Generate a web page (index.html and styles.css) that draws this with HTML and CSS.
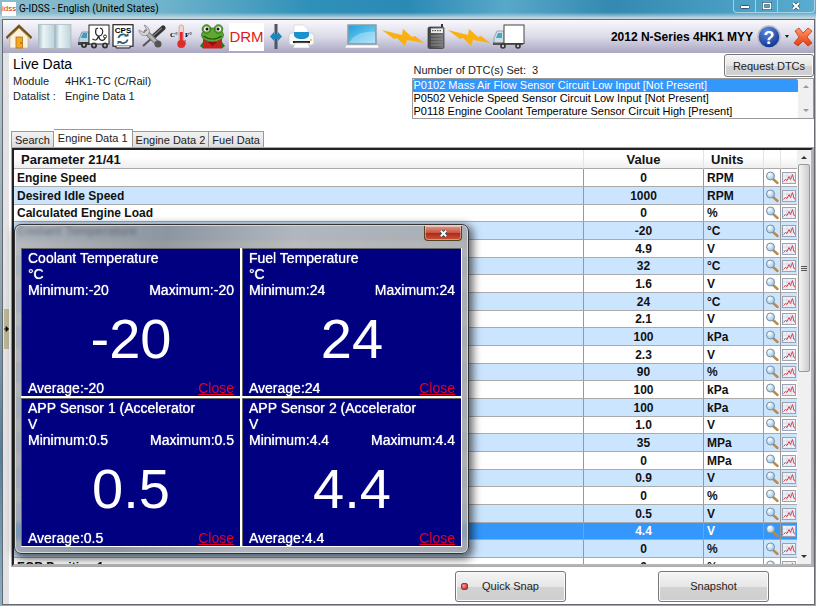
FILE: index.html
```html
<!DOCTYPE html>
<html lang="en">
<head>
<meta charset="utf-8">
<title>G-IDSS - English (United States)</title>
<link rel="stylesheet" href="styles.css">
</head>
<body>
<svg class="defs" aria-hidden="true">
  <defs>
    <radialGradient id="lens" cx="35%" cy="30%" r="80%"><stop offset="0" stop-color="#fff"/><stop offset="1" stop-color="#8fbfe0"/></radialGradient>
    <linearGradient id="sky" x1="0" y1="0" x2="1" y2="1"><stop offset="0" stop-color="#1c9fdc"/><stop offset="1" stop-color="#8fdcf8"/></linearGradient>
    <linearGradient id="page" x1="0" x2="1"><stop offset="0" stop-color="#9fbfca"/><stop offset=".3" stop-color="#eaf4f6"/><stop offset="1" stop-color="#bcd3da"/></linearGradient>
    <radialGradient id="ball" cx="40%" cy="25%" r="80%"><stop offset="0" stop-color="#5d8be0"/><stop offset="1" stop-color="#0b2c8c"/></radialGradient>
    <linearGradient id="cross" x1="0" y1="0" x2="0" y2="1"><stop offset="0" stop-color="#ff9a6c"/><stop offset="1" stop-color="#e8390b"/></linearGradient>
    <linearGradient id="device" x1="0" x2="1"><stop offset="0" stop-color="#444"/><stop offset="1" stop-color="#777"/></linearGradient>
  </defs>
  <symbol id="mag" viewBox="0 0 14 14">
    <path d="M8 8l4.500 4" stroke="#b98a4a" stroke-width="2.400" stroke-linecap="round"/>
    <circle cx="5.500" cy="5" r="4" fill="url(#lens)" stroke="#7890a8"/>
  </symbol>
  <symbol id="chart" viewBox="0 0 14 12">
    <rect x=".5" y=".5" width="13" height="11" fill="#eef1f8" stroke="#9aa2b4"/>
    <path d="M1 4h12M1 7.500h12M5 1v10M9 1v10" stroke="#cfd5e4" stroke-width=".7"/>
    <path d="M1.500 9.500l2-2 1.500 1 2-4 1.500 3 2-5 1.500 6 1 .5" fill="none" stroke="#d8474f"/>
  </symbol>
  <symbol id="bolt" viewBox="0 0 42 18">
    <path d="M0 2l20 5 1-6 9 8 3-1 9 7-17-3-2 6-8-8-3 1z" fill="#fbb011"/>
  </symbol>
</svg>

<div class="window">
  <header class="titlebar">
    <span class="app-icon">idss</span>
    <h1>G-IDSS - English (United States)</h1>
    <div class="window-controls">
      <button aria-label="Minimize"><svg viewBox="0 0 10 8" width="10" height="8"><rect x=".5" y="3.500" width="9" height="3" rx="1" fill="#fff" stroke="#35586c"/></svg></button>
      <button aria-label="Maximize"><svg viewBox="0 0 10 8" width="10" height="8"><rect x="1.500" y="1.500" width="7" height="5" fill="none" stroke="#35586c" stroke-width="3"/><rect x="1.500" y="1.500" width="7" height="5" fill="none" stroke="#fff" stroke-width="1.500"/></svg></button>
      <button class="wide" aria-label="Close window"><svg viewBox="0 0 10 8" width="10" height="8"><path d="M2 1l6 6M8 1L2 7" stroke="#35586c" stroke-width="3.500"/><path d="M2 1l6 6M8 1L2 7" stroke="#fff" stroke-width="2"/></svg></button>
    </div>
  </header>

  <div class="frame">
    <nav class="toolbar" aria-label="Tools">
      <div class="tools">
        <button class="home" aria-label="Home"><svg viewBox="0 0 26 25" width="26" height="25"><path d="M4 12L13 4l9 8v12H4z" fill="#fbf3df" stroke="#b8a98a" stroke-width=".6"/><path d="M0.500 14L13 2l12.500 12" fill="none" stroke="#74501d" stroke-width="2.600"/><path d="M2 14L13 4l11 10" fill="none" stroke="#c79a4c" stroke-width="1"/><rect x="10" y="13" width="6.500" height="11" fill="#f5a722" stroke="#b36f0a" stroke-width=".8"/><circle cx="15" cy="19" r=".8" fill="#7b4a00"/></svg></button>
        <button class="book" aria-label="Manual"><svg viewBox="0 0 34 25" width="34" height="25"><rect x=".5" y=".5" width="16" height="24" fill="url(#page)" stroke="#a9b6bd" stroke-width=".7"/><rect x="17" y=".5" width="16" height="24" fill="url(#page)" stroke="#a9b6bd" stroke-width=".7"/></svg></button>
        <button class="diag" aria-label="Diagnostics"><svg viewBox="0 0 32 25" width="32" height="25"><path d="M1 20v-5l3-7h7v12z" fill="#b9d5de" stroke="#789" stroke-width=".8"/><path d="M3 14l2-5h4v5z" fill="#3d9cc4"/><path d="M0 18h12v3H0z" fill="#444"/><rect x="11" y="1" width="20" height="19" fill="#fff" stroke="#222"/><g fill="#333"><circle cx="6" cy="21" r="3"/><circle cx="16" cy="21.500" r="3"/><circle cx="27" cy="21.500" r="3"/></g><g fill="#bbb"><circle cx="6" cy="21" r="1.200"/><circle cx="16" cy="21.500" r="1.200"/><circle cx="27" cy="21.500" r="1.200"/></g><path d="M20 4l-2 1c-1 4 0 7 3 7s5-4 3-7l-2-1M21 12c0 6 6 5 6 2M20.500 12c-1 4-3 5-6 3" fill="none" stroke="#222" stroke-width="1.200"/><circle cx="27" cy="12.500" r="1.500" fill="#fff" stroke="#222"/></svg></button>
        <button class="cps" aria-label="CPS programming"><svg viewBox="0 0 22 25" width="22" height="25"><rect x="1" y=".7" width="20" height="21.500" fill="#fff" stroke="#222" stroke-width="1.200"/><text x="11" y="8.500" text-anchor="middle" class="cps-text">CPS</text><path d="M6.500 14a4.500 4 0 0 1 8-2M15.500 15.500a4.500 4 0 0 1-8 2" fill="none" stroke="#2d6078" stroke-width="1.800"/><path d="M12 12.500h4.500V9zM10 17H5.500v3.500z" fill="#2d6078"/><path d="M4 22v2h14v-2" fill="#ddd" stroke="#222"/></svg></button>
        <button class="wrench" aria-label="Service tools"><svg viewBox="0 0 28 25" width="28" height="25"><path d="M25 4L14 14" stroke="#333" stroke-width="5" stroke-linecap="round"/><path d="M24 4L15 12" stroke="#777" stroke-width="1.500"/><path d="M14 14l-9 8" stroke="#555" stroke-width="2"/><path d="M8 8l12 12" stroke="#777" stroke-width="5" stroke-linecap="round"/><path d="M8 8l12 12" stroke="#b5b5b5" stroke-width="3" stroke-linecap="round"/><path d="M6 1l3 5-3 3-5-3c0 4 4 7 8 5 4-2 3-8-3-10z" fill="#d5d5d5" stroke="#888" stroke-width=".8"/><circle cx="20" cy="20" r="3.500" fill="#555"/></svg></button>
        <button class="temp" aria-label="Temperature units"><svg viewBox="0 0 24 25" width="24" height="25"><text x="0" y="13" class="temp-text">C°</text><text x="15" y="13" class="temp-text">F°</text><rect x="9" y="1" width="4.500" height="18" rx="2" fill="#f0d4d4" stroke="#b99" stroke-width=".7"/><path d="M9.800 8h3v10h-3z" fill="#e02b2b"/><circle cx="11.300" cy="20" r="4" fill="#e02b2b"/><path d="M15 16v5" stroke="#d22"/></svg></button>
        <button class="frog" aria-label="Frog"><svg viewBox="0 0 25 25" width="25" height="25"><rect x="3" y="15" width="19" height="9.500" fill="#c8201c"/><path d="M0 22l3-4v6.500zM25 22l-3-4v6.500z" fill="#2d7a1e"/><ellipse cx="12.500" cy="11" rx="11" ry="7" fill="#5ea832" stroke="#2f6a17" stroke-width=".8"/><circle cx="6.500" cy="5" r="4.300" fill="#5ea832" stroke="#2f6a17" stroke-width=".8"/><circle cx="18.500" cy="5" r="4.300" fill="#5ea832" stroke="#2f6a17" stroke-width=".8"/><circle cx="6.500" cy="5" r="2.500" fill="#fff"/><circle cx="18.500" cy="5" r="2.500" fill="#fff"/><circle cx="7" cy="5" r="1.500" fill="#111"/><circle cx="18" cy="5" r="1.500" fill="#111"/><path d="M3.500 12c5 4 13 4 18 0" fill="none" stroke="#224d10" stroke-width="1.200"/><path d="M8 18h9l-4.500 4z" fill="#8e0d0d"/></svg></button>
        <button class="drm">DRM</button>
        <button class="split" aria-label="Split view"><svg viewBox="0 0 12 25" width="12" height="25"><rect x="4.500" y="0" width="3" height="25" fill="#4b5563"/><path d="M0 12.500L4 8v9zM12 12.500L8 8v9z" fill="#1f86bd"/><rect x="3" y="10" width="6" height="5" fill="#1f86bd"/></svg></button>
        <button class="print" aria-label="Print"><svg viewBox="0 0 27 25" width="27" height="25"><path d="M6 10V1h10l4 5v4z" fill="#fff" stroke="#ccc" stroke-width=".6"/><rect x="1" y="9" width="25" height="12" rx="3" fill="#f8f8fa" stroke="#c6c6ce" stroke-width=".7"/><path d="M6 8h15v4q-2 3-5 3h-5q-3 0-5-3z" fill="#1b91cd"/><path d="M5 17h17v2H5z" fill="#222"/><circle cx="23" cy="16" r="1" fill="#d8c33a"/><path d="M7 19h13l2 5H5z" fill="#fff" stroke="#bbb" stroke-width=".6"/></svg></button>
      </div>
      <div class="link-status">
        <svg viewBox="0 0 34 25" width="34" height="25"><rect x="3" y="1" width="28" height="19" fill="url(#sky)" stroke="#8a9aa6" stroke-width="1.500"/><path d="M4 19c5-9 14-12 26-11v11z" fill="#fff" opacity=".3"/><path d="M1 21h32l1 3H0z" fill="#fff" stroke="#bbb" stroke-width=".6"/></svg>
        <svg class="bolt" width="42" height="18"><use href="#bolt"/></svg>
        <svg viewBox="0 0 18 25" width="18" height="25"><path d="M14 0h2v4h-2z" fill="#333"/><rect x="1" y="3" width="16" height="21.500" rx="1.500" fill="url(#device)" stroke="#333" stroke-width=".7"/><rect x="4" y="4.500" width="12" height="4.500" fill="#eee"/><path d="M5 6.700h10" stroke="#333" stroke-dasharray="1.500 1"/><path d="M4 12h12M4 15h12M4 18h12M4 21h12" stroke="#999" stroke-width=".8"/></svg>
        <svg class="bolt" width="42" height="18"><use href="#bolt"/></svg>
        <svg viewBox="0 0 32 25" width="32" height="25"><path d="M1 20v-6l3-7h7v13z" fill="#cfe0e4" stroke="#8a9aa0" stroke-width=".8"/><path d="M3 14l2-5h4v5z" fill="#3da9cc"/><path d="M0 18.500h30v2.500H0z" fill="#555"/><rect x="11" y="1" width="20" height="18.500" fill="#fff" stroke="#444"/><g fill="#333"><circle cx="10" cy="22" r="2.800"/><circle cx="25" cy="22" r="2.800"/></g><g fill="#ccc"><circle cx="10" cy="22" r="1.200"/><circle cx="25" cy="22" r="1.200"/></g></svg>
      </div>
      <div class="vehicle">
        <strong>2012 N-Series 4HK1 MYY</strong>
        <button class="help" aria-label="Help"><svg viewBox="0 0 24 24" width="24" height="24"><circle cx="12" cy="12" r="11" fill="url(#ball)" stroke="#b5bac6" stroke-width="1.500"/><text x="12" y="18.500" text-anchor="middle" class="help-text">?</text></svg></button>
        <span class="caret"></span>
        <button class="exit" aria-label="Exit"><svg viewBox="0 0 20 20" width="20" height="20"><path d="M2 4l4-3 4 5 5-5 4 3-5 6 5 6-4 3-5-5-5 5-4-3 5-6z" fill="url(#cross)" stroke="#c03a10" stroke-width=".8" stroke-linejoin="round"/></svg></button>
      </div>
    </nav>

    <main class="content">
      <section class="summary">
        <div class="module">
          <h2>Live Data</h2>
          <dl>
            <dt>Module</dt><dd>4HK1-TC (C/Rail)</dd>
            <dt>Datalist :</dt><dd>Engine Data 1</dd>
          </dl>
        </div>
        <div class="dtc">
          <div class="dtc-head">
            <label for="dtc-list">Number of DTC(s) Set: &nbsp;3</label>
            <button class="btn request">Request DTCs</button>
          </div>
          <div class="dtc-box">
            <select id="dtc-list" size="3">
              <option selected>P0102 Mass Air Flow Sensor Circuit Low Input [Not Present]</option>
              <option>P0502 Vehicle Speed Sensor Circuit Low Input [Not Present]</option>
              <option>P0118 Engine Coolant Temperature Sensor Circuit High [Present]</option>
            </select>
            <div class="mini-scroll"><i class="up"></i><i class="down"></i></div>
          </div>
        </div>
      </section>

      <div class="tabs" role="tablist">
        <button role="tab">Search</button>
        <button role="tab" class="active" aria-selected="true">Engine Data 1</button>
        <button role="tab">Engine Data 2</button>
        <button role="tab">Fuel Data</button>
      </div>

      <section class="grid-panel">
        <div class="grid-view">
          <table>
            <colgroup><col><col class="c-value"><col class="c-units"><col class="c-icon"><col class="c-icon2"></colgroup>
            <thead><tr><th>Parameter 21/41</th><th>Value</th><th>Units</th><th></th><th></th></tr></thead>
            <tbody>
              <tr><td>Engine Speed</td><td>0</td><td>RPM</td><td><button aria-label="Zoom"><svg><use href="#mag"/></svg></button></td><td><button aria-label="Graph"><svg><use href="#chart"/></svg></button></td></tr>
              <tr><td>Desired Idle Speed</td><td>1000</td><td>RPM</td><td><button aria-label="Zoom"><svg><use href="#mag"/></svg></button></td><td><button aria-label="Graph"><svg><use href="#chart"/></svg></button></td></tr>
              <tr><td>Calculated Engine Load</td><td>0</td><td>%</td><td><button aria-label="Zoom"><svg><use href="#mag"/></svg></button></td><td><button aria-label="Graph"><svg><use href="#chart"/></svg></button></td></tr>
              <tr><td>Coolant Temperature</td><td>-20</td><td>°C</td><td><button aria-label="Zoom"><svg><use href="#mag"/></svg></button></td><td><button aria-label="Graph"><svg><use href="#chart"/></svg></button></td></tr>
              <tr><td></td><td>4.9</td><td>V</td><td><button aria-label="Zoom"><svg><use href="#mag"/></svg></button></td><td><button aria-label="Graph"><svg><use href="#chart"/></svg></button></td></tr>
              <tr><td></td><td>32</td><td>°C</td><td><button aria-label="Zoom"><svg><use href="#mag"/></svg></button></td><td><button aria-label="Graph"><svg><use href="#chart"/></svg></button></td></tr>
              <tr><td></td><td>1.6</td><td>V</td><td><button aria-label="Zoom"><svg><use href="#mag"/></svg></button></td><td><button aria-label="Graph"><svg><use href="#chart"/></svg></button></td></tr>
              <tr><td></td><td>24</td><td>°C</td><td><button aria-label="Zoom"><svg><use href="#mag"/></svg></button></td><td><button aria-label="Graph"><svg><use href="#chart"/></svg></button></td></tr>
              <tr><td></td><td>2.1</td><td>V</td><td><button aria-label="Zoom"><svg><use href="#mag"/></svg></button></td><td><button aria-label="Graph"><svg><use href="#chart"/></svg></button></td></tr>
              <tr><td></td><td>100</td><td>kPa</td><td><button aria-label="Zoom"><svg><use href="#mag"/></svg></button></td><td><button aria-label="Graph"><svg><use href="#chart"/></svg></button></td></tr>
              <tr><td></td><td>2.3</td><td>V</td><td><button aria-label="Zoom"><svg><use href="#mag"/></svg></button></td><td><button aria-label="Graph"><svg><use href="#chart"/></svg></button></td></tr>
              <tr><td></td><td>90</td><td>%</td><td><button aria-label="Zoom"><svg><use href="#mag"/></svg></button></td><td><button aria-label="Graph"><svg><use href="#chart"/></svg></button></td></tr>
              <tr><td></td><td>100</td><td>kPa</td><td><button aria-label="Zoom"><svg><use href="#mag"/></svg></button></td><td><button aria-label="Graph"><svg><use href="#chart"/></svg></button></td></tr>
              <tr><td></td><td>100</td><td>kPa</td><td><button aria-label="Zoom"><svg><use href="#mag"/></svg></button></td><td><button aria-label="Graph"><svg><use href="#chart"/></svg></button></td></tr>
              <tr><td></td><td>1.0</td><td>V</td><td><button aria-label="Zoom"><svg><use href="#mag"/></svg></button></td><td><button aria-label="Graph"><svg><use href="#chart"/></svg></button></td></tr>
              <tr><td></td><td>35</td><td>MPa</td><td><button aria-label="Zoom"><svg><use href="#mag"/></svg></button></td><td><button aria-label="Graph"><svg><use href="#chart"/></svg></button></td></tr>
              <tr><td></td><td>0</td><td>MPa</td><td><button aria-label="Zoom"><svg><use href="#mag"/></svg></button></td><td><button aria-label="Graph"><svg><use href="#chart"/></svg></button></td></tr>
              <tr><td></td><td>0.9</td><td>V</td><td><button aria-label="Zoom"><svg><use href="#mag"/></svg></button></td><td><button aria-label="Graph"><svg><use href="#chart"/></svg></button></td></tr>
              <tr><td></td><td>0</td><td>%</td><td><button aria-label="Zoom"><svg><use href="#mag"/></svg></button></td><td><button aria-label="Graph"><svg><use href="#chart"/></svg></button></td></tr>
              <tr><td></td><td>0.5</td><td>V</td><td><button aria-label="Zoom"><svg><use href="#mag"/></svg></button></td><td><button aria-label="Graph"><svg><use href="#chart"/></svg></button></td></tr>
              <tr class="selected"><td></td><td>4.4</td><td>V</td><td><button aria-label="Zoom"><svg><use href="#mag"/></svg></button></td><td><button aria-label="Graph"><svg><use href="#chart"/></svg></button></td></tr>
              <tr class="tint"><td></td><td>0</td><td>%</td><td><button aria-label="Zoom"><svg><use href="#mag"/></svg></button></td><td><button aria-label="Graph"><svg><use href="#chart"/></svg></button></td></tr>
              <tr><td>EGR Position 1</td><td>0</td><td>%</td><td><button aria-label="Zoom"><svg><use href="#mag"/></svg></button></td><td><button aria-label="Graph"><svg><use href="#chart"/></svg></button></td></tr>
            </tbody>
          </table>
        </div>
        <div class="scrollbar"><i class="up"></i><div class="thumb"><i></i><i></i><i></i></div><div class="track"></div><i class="down"></i></div>
      </section>

      <footer class="actions">
        <button class="btn snap"><span class="dot"></span>Quick Snap</button>
        <button class="btn snap">Snapshot</button>
      </footer>
    </main>
    <button class="splitter" aria-label="Expand side panel"><svg viewBox="0 0 6 8" width="5" height="8"><path d="M0 4h3M2.500 1L5.500 4l-3 3z" stroke="#000" fill="#000"/></svg></button>
  </div>

  <div class="dialog" role="dialog" aria-label="Parameter values">
    <div class="dialog-bar"><button class="dialog-close" aria-label="Close dialog"><svg viewBox="0 0 12 10" width="11" height="9"><path d="M3 2l6 6M9 2L3 8" stroke="#444" stroke-width="4"/><path d="M3 2l6 6M9 2L3 8" stroke="#fff" stroke-width="2.200"/></svg></button></div>
    <div class="gauges">
      <article><p>Coolant Temperature</p><p>°C</p><div class="pair"><span>Minimum:-20</span><span>Maximum:-20</span></div><div class="big">-20</div><div class="pair"><span>Average:-20</span><a href="#">Close</a></div></article>
      <article><p>Fuel Temperature</p><p>°C</p><div class="pair"><span>Minimum:24</span><span>Maximum:24</span></div><div class="big">24</div><div class="pair"><span>Average:24</span><a href="#">Close</a></div></article>
      <article><p>APP Sensor 1 (Accelerator</p><p>V</p><div class="pair"><span>Minimum:0.5</span><span>Maximum:0.5</span></div><div class="big">0.5</div><div class="pair"><span>Average:0.5</span><a href="#">Close</a></div></article>
      <article><p>APP Sensor 2 (Accelerator</p><p>V</p><div class="pair"><span>Minimum:4.4</span><span>Maximum:4.4</span></div><div class="big">4.4</div><div class="pair"><span>Average:4.4</span><a href="#">Close</a></div></article>
    </div>
  </div>
</div>
</body>
</html>
```
FILE: styles.css
```css
* { box-sizing: border-box; }
body { margin: 0; font: 11px/14px "Liberation Sans", Arial, sans-serif; color: #222; }
h1, h2, p, dl, dd { margin: 0; }
button { margin: 0; padding: 0; border: 0; background: none; font: inherit; color: inherit; }
svg { display: block; flex: none; }
.defs { position: absolute; width: 0; height: 0; }

.window { position: relative; display: flex; flex-direction: column; height: 100vh; padding: 0 1px 1px 2px; background: linear-gradient(#b9cdd8, #8ca2b0 50%, #4e7f9b 75%, #8cb0c4); overflow: hidden; }

/* Title bar */
.titlebar { display: flex; align-items: flex-start; gap: 3px; height: 19px; margin: 0 -1px 0 -2px; padding-left: 2px; flex: none; background: linear-gradient(transparent 65%, #c3d6e0 95%), linear-gradient(90deg, #8bbccc, #6fb3cb 20%, #2f90b8 38%, #2b8ab4 50%, #58a8c9 62%, #3389b0 75%, #5aadd0); }
.app-icon { width: 14px; height: 14px; margin-top: 2px; background: #fff; color: #d22; font: 8px/13px "Liberation Sans", sans-serif; text-align: center; overflow: hidden; }
.titlebar h1 { flex: 1; font: 10px/17px Roboto, sans-serif; color: #000; }
.window-controls { display: flex; height: 13px; margin-right: 1px; border: 1px solid #a9d0e2; border-top: 0; border-radius: 0 0 4px 4px; }
.window-controls button { display: flex; align-items: center; justify-content: center; width: 22px; border-right: 1px solid #a9d0e2; }
.window-controls .wide { width: 36px; border: 0; }

.frame { position: relative; display: flex; flex-direction: column; flex: 1; min-height: 0; border: 1px solid #666a70; background: #fff; }

/* Toolbar */
.toolbar { display: flex; align-items: center; height: 33px; flex: none; padding: 0 1px 0 3px; background: linear-gradient(#f8f8fc, #dcdbe8 50%, #a9a6c2); }
.tools { display: flex; align-items: center; gap: 6px; }
.diag { margin-right: -4px; }
.cps, .wrench, .frog { margin-right: -2px; }
.drm { width: 35px; height: 28px; background: #fff; color: #e01818; font: 15px/28px "Liberation Sans", sans-serif; text-align: center; }
.cps-text { font: bold 8px "Liberation Sans", sans-serif; }
.temp-text { font: bold 7px "Liberation Serif", serif; }
.help-text { font: bold 18px "Liberation Sans", sans-serif; fill: #fff; }
.link-status { display: flex; align-items: center; gap: 3px; margin-left: 30px; }
.vehicle { display: flex; align-items: center; gap: 4px; margin-left: auto; color: #000; }
.vehicle strong { font-size: 12px; }
.caret { border: 2px solid transparent; border-top: 3px solid #222; border-bottom: 0; }

/* Summary */
.content { display: flex; flex-direction: column; flex: 1; min-height: 0; padding-left: 6px; background: linear-gradient(90deg, #e3e3e6 6px, #fff 6px); }
.summary { display: flex; justify-content: space-between; flex: none; height: 77px; }
.module { padding: 3px 0 0 4px; }
.module h2 { font: 14px/16px "Liberation Sans", sans-serif; color: #000; }
.module dl { display: grid; grid-template-columns: 52px auto; row-gap: 1px; margin-top: 2px; }
.dtc { width: 50%; }
.dtc-head { display: flex; justify-content: space-between; align-items: flex-end; padding: 1px 0 0 2px; }
.btn { border: 1px solid #777; border-radius: 3px; background: linear-gradient(#f5f5f5, #e6e6e6 50%, #d2d2d2 52%, #cfcfcf); box-shadow: inset 0 0 0 1px #fafafa; color: #222; }
.request { width: 90px; height: 23px; }
.dtc-box { display: flex; margin-top: 1px; border: 1px solid #999; }
.dtc-box select { flex: 1; height: 39px; margin: 0; padding: 0; border: 0; background: #fff; font: 11px/13px "Liberation Sans", sans-serif; overflow: hidden; outline: 0; }
.dtc-box option { min-height: 13px; height: 13px; padding: 0 1px; font: 11px/13px "Liberation Sans", sans-serif; }
.dtc-box option:checked { background: linear-gradient(#3497fb, #3497fb); -webkit-text-fill-color: #fff; }
.mini-scroll { display: flex; flex-direction: column; justify-content: space-between; align-items: center; width: 15px; padding: 6px 0; background: #f0f0f0; }
.up, .down { border: 3px solid transparent; }
.up { border-top: 0; border-bottom: 3px solid #333; }
.down { border-bottom: 0; border-top: 3px solid #333; }
.mini-scroll .up { border-bottom-color: #999; }
.mini-scroll .down { border-top-color: #999; }

/* Tabs */
.tabs { display: flex; align-items: flex-end; flex: none; height: 18px; padding-left: 2px; }
.tabs button { height: 17px; padding: 0 3px; border: 1px solid #999; border-bottom: 0; border-left-width: 0; background: linear-gradient(#f2f2f2, #dcdcdc); }
.tabs button:first-child { border-left-width: 1px; }
.tabs .active { height: 19px; padding: 0 4px 2px; background: #fff; }

/* Parameter table */
.grid-panel { display: flex; flex: 1; min-height: 0; margin: 0 1px 0 3px; border: 2px solid #222; border-color: #222 #b5b5b5 #b5b5b5 #222; outline: 1px solid #aaa; }
.grid-view { flex: 1; min-width: 0; overflow: hidden; background: #fff; }
table { width: 100%; border-collapse: separate; border-spacing: 0; table-layout: fixed; font-weight: bold; color: #111; }
.c-value { width: 120px; }
.c-units { width: 60px; }
.c-icon { width: 17px; }
.c-icon2 { width: 16px; }
th { height: 19px; padding: 0 7px; font-size: 13px; line-height: 17px; text-align: left; border-right: 1px solid #e4e4e4; border-bottom: 1px solid #aaa; background: linear-gradient(#fff 40%, #eee); }
td { height: 18px; padding: 0 3px; font-size: 12px; line-height: 16px; border-right: 1px solid #999; border-bottom: 1px solid #aaa; overflow: hidden; }
tbody tr:nth-child(3n) td { height: 17px; }
th:nth-child(2), td:nth-child(2) { text-align: center; }
th:last-child, td:last-child { border-right: 0; }
td:nth-child(n+4) { padding: 0; }
tbody tr:nth-child(even), tbody .tint { background: #cce5ff; }
tbody .selected { background: #3497fb; color: #fff; }
td button { display: block; margin: 0 auto; }
td svg { width: 14px; height: 14px; }

.scrollbar { display: flex; flex-direction: column; align-items: center; width: 14px; padding: 6px 0; background: #f0f0f0; }
.thumb { display: flex; flex-direction: column; justify-content: center; align-items: center; gap: 1px; flex: 52; width: 12px; margin-top: 5px; border: 1px solid #999; border-radius: 2px; background: linear-gradient(90deg, #f5f5f5, #ccc); }
.thumb i { width: 6px; height: 1px; background: #555; }
.track { flex: 46; }

.actions { display: flex; justify-content: flex-end; align-items: center; gap: 92px; flex: none; height: 38px; padding: 2px 45px 0 0; }
.snap { position: relative; width: 111px; height: 31px; }
.dot { position: absolute; left: 5px; top: 11px; width: 7px; height: 7px; border: 1px solid #555; border-radius: 2px; background: radial-gradient(circle at 35% 35%, #f99, #c01010); }
.splitter { position: absolute; left: 1px; top: 289px; width: 5px; height: 40px; background: #b9b796; }

/* Floating gauge dialog */
.dialog { position: absolute; left: 14px; top: 224px; width: 455px; padding: 1px 6px 6px; border: 1px solid #333; border-radius: 7px; background: linear-gradient(100deg, #a0a4a9c0, #7d848cd0 30%, #a9acafd0 55%, #9ea1a4d8); backdrop-filter: blur(2px); box-shadow: inset 0 0 0 1px #d5d8da, 2px 3px 9px 2px #0009; }
.dialog-bar { display: flex; justify-content: flex-end; align-items: flex-start; height: 22px; }
.dialog-close { display: flex; align-items: center; justify-content: center; width: 38px; height: 15px; border: 1px solid #542; border-top: 0; border-radius: 0 0 4px 4px; background: linear-gradient(#dd9a8b, #c8523e 50%, #b02a15 52%, #c8553c); box-shadow: inset 0 0 0 1px #ffffff60; }
.gauges { display: grid; grid-template-columns: 1fr 1fr; gap: 2px; padding: 0 1px 1px 0; background: #fff; }
.gauges article { display: flex; flex-direction: column; height: 148px; padding: 1px 6px 0; border-top: 1px solid #666; border-left: 1px solid #666; background: #000080; color: #fff; font-size: 14px; line-height: 16px; text-shadow: 0 0 1px #fff; }
.pair { display: flex; justify-content: space-between; }
.pair a { color: #e0002a; text-shadow: none; }
.big { flex: 1; display: flex; align-items: center; justify-content: center; font-size: 56px; line-height: 60px; text-shadow: none; }
```
